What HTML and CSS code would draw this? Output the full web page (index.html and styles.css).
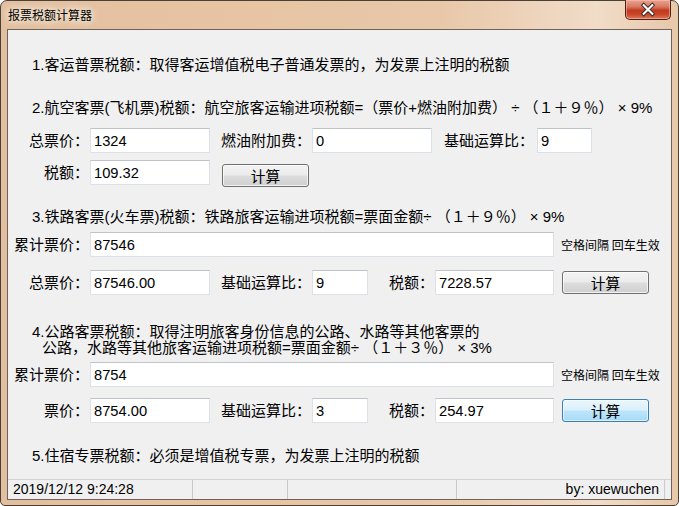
FILE: index.html
```html
<!DOCTYPE html>
<html lang="zh-CN">
<head>
<meta charset="utf-8">
<title>报票税额计算器</title>
<link rel="stylesheet" href="styles.css">
</head>
<body>
<div class="window">
  <div class="titlebar">
    <span class="title">报票税额计算器</span>
    <div class="close">
      <svg width="46" height="19" viewBox="0 0 46 19">
        <path d="M18.5 5 L27.5 14 M27.5 5 L18.5 14" stroke="#3a2a26" stroke-width="4.2" stroke-linecap="square"/>
        <path d="M18.5 5 L27.5 14 M27.5 5 L18.5 14" stroke="#ffffff" stroke-width="2.2" stroke-linecap="square"/>
      </svg>
    </div>
  </div>
  <div class="client">
    <div class="content">
      <p class="line l1">1.客运普票税额：取得客运增值税电子普通发票的，为发票上注明的税额</p>
      <p class="line l2">2.航空客票(飞机票)税额：航空旅客运输进项税额=（票价+燃油附加费） ÷ （１＋９％） × 9%</p>
      <div class="row ra">
        <span class="lbl w82">总票价：</span><input class="tb w120" type="text" value="1324">
        <span class="lbl w102">燃油附加费：</span><input class="tb w120" type="text" value="0">
        <span class="lbl w105">基础运算比：</span><input class="tb w55" type="text" value="9">
      </div>
      <div class="row rb">
        <span class="lbl w82">税额：</span><input class="tb w120" type="text" value="109.32">
        <button class="btn b1">计算</button>
      </div>
      <p class="line l3">3.铁路客票(火车票)税额：铁路旅客运输进项税额=票面金额÷ （１＋９％） × 9%</p>
      <div class="row rc">
        <span class="lbl w82">累计票价：</span><input class="tb w464" type="text" value="87546">
        <span class="note">空格间隔 回车生效</span>
      </div>
      <div class="row rd">
        <span class="lbl w82">总票价：</span><input class="tb w120" type="text" value="87546.00">
        <span class="lbl w102">基础运算比：</span><input class="tb w56" type="text" value="9">
        <span class="lbl w67">税额：</span><input class="tb w119" type="text" value="7228.57">
        <button class="btn b2">计算</button>
      </div>
      <div class="l4">
        <p class="line l4a">4.公路客票税额：取得注明旅客身份信息的公路、水路等其他客票的</p>
        <p class="line l4b">公路，水路等其他旅客运输进项税额=票面金额÷ （１＋３％） × 3%</p>
      </div>
      <div class="row re">
        <span class="lbl w82">累计票价：</span><input class="tb w464" type="text" value="8754">
        <span class="note">空格间隔 回车生效</span>
      </div>
      <div class="row rf">
        <span class="lbl w82">票价：</span><input class="tb w120" type="text" value="8754.00">
        <span class="lbl w102">基础运算比：</span><input class="tb w56" type="text" value="3">
        <span class="lbl w67">税额：</span><input class="tb w119" type="text" value="254.97">
        <button class="btn b2 hot">计算</button>
      </div>
      <p class="line l5">5.住宿专票税额：必须是增值税专票，为发票上注明的税额</p>
    </div>
    <div class="statusbar">
      <div class="panel p1">2019/12/12 9:24:28</div>
      <div class="panel p2"></div>
      <div class="panel p3"></div>
      <div class="panel p4">by: xuewuchen</div>
      <div class="grip"></div>
    </div>
  </div>
</div>
</body>
</html>
```
FILE: styles.css
```css
* { box-sizing: border-box; }
html, body { margin: 0; padding: 0; }
body {
  width: 679px;
  height: 506px;
  overflow: hidden;
  background: #ffffff;
  font-family: "Liberation Sans", "Noto Sans CJK SC", sans-serif;
  color: #000;
}
.window {
  width: 679px;
  height: 506px;
  border: 1px solid #4b4038;
  border-radius: 7px 7px 5px 5px;
  background: linear-gradient(to right, #e2bf9f 0%, #e6c4a4 35%, #e8c8a9 65%, #f1dcc8 88%, #e7c7a8 100%);
  padding: 0 6px 5px 6px;
  display: flex;
  flex-direction: column;
}
.titlebar {
  height: 28px;
  display: flex;
  align-items: flex-start;
}
.title {
  font-family: "Noto Sans CJK SC", sans-serif;
  font-size: 12px;
  line-height: 16px;
  margin-top: 6px;
  padding-left: 1px;
  text-shadow: 0 0 6px #fff8f0, 0 0 10px #fff8f0;
}
.close {
  margin-left: auto;
  margin-right: 1px;
  margin-top: -1px;
  width: 46px;
  height: 20px;
  border: 1px solid #4a2318;
  border-top: none;
  border-radius: 0 0 5px 5px;
  background: linear-gradient(to bottom, #e9a493 0%, #d87a63 35%, #c2391f 55%, #c84528 75%, #dc7a5c 100%);
  box-shadow: inset 0 0 0 1px rgba(255, 200, 180, 0.5);
  display: flex;
  align-items: center;
  justify-content: center;
}
.close svg { display: block; }
.client {
  flex: 1;
  border: 1px solid #6f6259;
  background: #f0f0f0;
  display: flex;
  flex-direction: column;
}
.content {
  flex: 1;
  padding-top: 26px;
  font-size: 15px;
}
.line {
  margin: 0;
  line-height: 18px;
  padding-left: 24px;
  white-space: nowrap;
}
.l2 { margin-top: 25px; }
.l3 { margin-top: 23px; }
.l4 { margin-top: 29px; }
.l4 .line { line-height: 16px; }
.l4 .l4b { padding-left: 34px; }
.l5 { margin-top: 24px; }
.row {
  display: flex;
  align-items: flex-start;
  height: 25px;
}
.ra { margin-top: 11px; }
.rb { margin-top: 7px; }
.rc { margin-top: 6px; }
.rd { margin-top: 13px; }
.re { margin-top: 6px; }
.rf { margin-top: 11px; }
.lbl {
  text-align: right;
  line-height: 25px;
  white-space: nowrap;
  padding-right: 1px;
}
.w82 { width: 82px; }
.w102 { width: 102px; }
.w105 { width: 105px; padding-right: 3px; }
.w67 { width: 67px; padding-right: 1px; }
.tb {
  height: 25px;
  margin: 0;
  padding: 0 3px;
  border: 1px solid #dde1e7;
  border-top-color: #bfc3ca;
  background: #ffffff;
  font-family: "Liberation Sans", "Noto Sans CJK SC", sans-serif;
  font-size: 14.7px;
  color: #000;
  outline: none;
}
.w120 { width: 120px; }
.w55 { width: 55px; }
.w56 { width: 56px; }
.w119 { width: 119px; }
.w464 { width: 464px; }
.note {
  font-family: "Noto Sans CJK SC", sans-serif;
  font-size: 12px;
  line-height: 25px;
  margin-left: 7px;
  white-space: nowrap;
}
.btn {
  width: 87px;
  height: 23px;
  margin: 4px 0 0 0;
  padding: 0;
  border: 1px solid #707070;
  border-radius: 3px;
  background: linear-gradient(to bottom, #f3f3f3 0%, #ebebeb 49%, #dddddd 51%, #cfcfcf 100%);
  box-shadow: inset 0 0 0 1px rgba(255, 255, 255, 0.7);
  font-family: "Noto Sans CJK SC", sans-serif;
  font-size: 14.7px;
  line-height: 20px;
  color: #000;
}
.b1 { margin-left: 12px; }
.b2 { margin-left: 8px; margin-top: 1px; }
.hot {
  border-color: #3c7fb1;
  background: linear-gradient(to bottom, #eaf6fd 0%, #d9f0fc 49%, #bee6fd 51%, #a7d9f5 100%);
  box-shadow: inset 0 0 0 1px rgba(255, 255, 255, 0.6);
}
.statusbar {
  height: 20px;
  border-top: 1px solid #d3d3d3;
  display: flex;
  font-size: 14px;
  line-height: 19px;
}
.panel {
  height: 19px;
  border-right: 1px solid #c9c9c9;
  white-space: nowrap;
}
.p1 { width: 185px; padding-left: 5px; }
.p2 { width: 95px; }
.p3 { width: 169px; }
.p4 { width: 208px; text-align: right; padding-right: 5px; }
.grip { flex: 1; }
```
